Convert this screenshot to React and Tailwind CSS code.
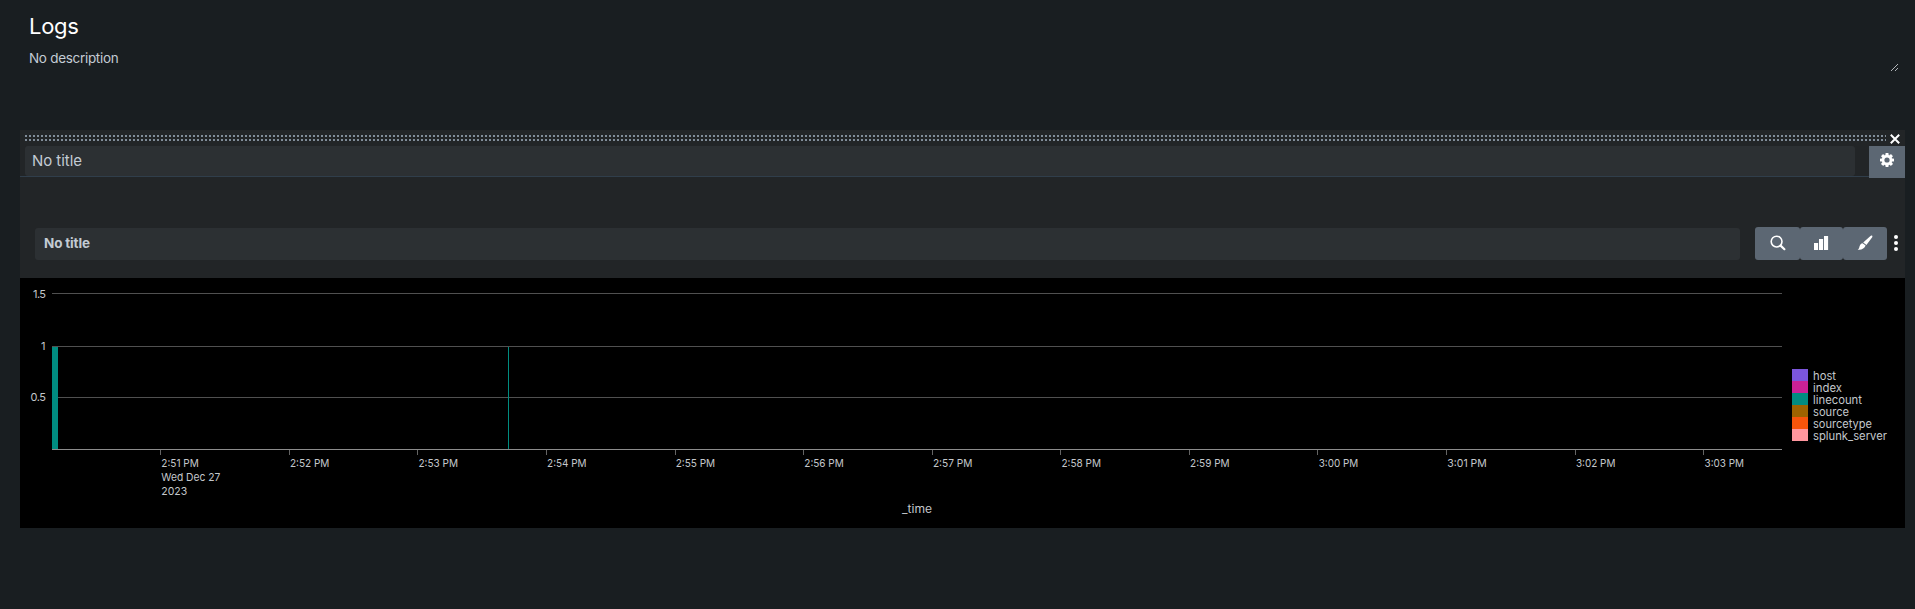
const ink = '#c3c7cb';
const labels = ['2:51 PM', '2:52 PM', '2:53 PM', '2:54 PM', '2:55 PM', '2:56 PM', '2:57 PM', '2:58 PM', '2:59 PM', '3:00 PM', '3:01 PM', '3:02 PM', '3:03 PM'];
const series = [
  ['host', '#7b56db', 23],
  ['index', '#cb2196', 29],
  ['linecount', '#008c80', 49],
  ['source', '#9d6300', 36],
  ['sourcetype', '#f6540b', 59],
  ['splunk_server', '#ff969e', 74],
];

function Dots() {
  return (
    <svg width="1861" height="6" shapeRendering="crispEdges" aria-hidden="true">
      <defs>
        <pattern id="grip" width="4" height="4" patternUnits="userSpaceOnUse">
          <rect width="2" height="2" fill="#818d99" />
        </pattern>
      </defs>
      <rect width="1861" height="6" fill="url(#grip)" />
    </svg>
  );
}

function Gear() {
  return (
    <svg width="14" height="14" viewBox="-7 -7 14 14" aria-hidden="true">
      <g fill="#fff">
        {[0, 45, 90, 135].map((a) => (
          <rect key={a} x="-1.6" y="-7" width="3.2" height="14" rx="0.7" transform={`rotate(${a})`} />
        ))}
        <circle r="5.2" />
      </g>
      <circle r="2.6" fill="#5c6773" />
    </svg>
  );
}

function Search() {
  return (
    <svg className="mb-0.5" width="16" height="16" viewBox="0 0 16 16" fill="none" stroke="#fff" aria-hidden="true">
      <circle cx="6.6" cy="6.6" r="5.4" strokeWidth="1.6" />
      <path d="M10.6 10.6L14.4 14.2" strokeWidth="2.2" strokeLinecap="round" />
    </svg>
  );
}

function Bars() {
  return (
    <svg className="mb-0.5 mr-px" width="16" height="16" viewBox="0 0 16 16" fill="#fff" aria-hidden="true">
      <rect x="1" y="8" width="4.1" height="7" />
      <rect x="6" y="4" width="4.1" height="11" />
      <rect x="11" y="1" width="4.1" height="14" />
    </svg>
  );
}

function Brush() {
  return (
    <svg className="mb-0.5" width="16" height="16" viewBox="0 0 16 16" fill="#fff" aria-hidden="true">
      <path d="M14.8 .6C15.5 .8 15.6 1.5 15.2 2.2L9.4 10L6.2 7.5L13.2 1.2C13.8 .6 14.4 .4 14.8 .6Z" />
      <path d="M5.6 8.2L8.6 10.6C7.6 13.4 4.3 15.4 .7 14.7C2.6 13.6 2 12 3 10.2C3.6 9 4.4 8.3 5.6 8.2Z" />
    </svg>
  );
}

function Chart() {
  return (
    <svg className="block" width="1885" height="250" viewBox="20 278 1885 250" fontSize="11" fill={ink}>
      <g shapeRendering="crispEdges">
        <rect x="52" y="293" width="1730" height="1" fill="#505050" />
        <rect x="52" y="346" width="1730" height="1" fill="#505050" />
        <rect x="52" y="397" width="1730" height="1" fill="#505050" />
        <rect x="52" y="347" width="6" height="102" fill="#008c80" />
        <rect x="508" y="347" width="1" height="102" fill="#008c80" />
        <rect x="52" y="449" width="1730" height="1" fill="#8c8c8c" />
        {labels.map((l, i) => (
          <rect key={l} x={Math.floor(160.6 + i * 128.6)} y="450" width="1" height="5" fill="#646464" />
        ))}
      </g>
      <text x="33" y="298" textLength="13">1.5</text>
      <text x="41" y="350">1</text>
      <text x="30.5" y="401" textLength="15.5">0.5</text>
      {labels.map((l, i) => (
        <text key={l} x={161.3 + i * 128.6} y="467" lengthAdjust="spacingAndGlyphs" textLength={i === 0 ? 37.5 : 39.5}>{l}</text>
      ))}
      <text x="161.3" y="481" lengthAdjust="spacingAndGlyphs" textLength="59">Wed Dec 27</text>
      <text x="161.3" y="495" lengthAdjust="spacingAndGlyphs" textLength="26">2023</text>
      <text x="902" y="513" lengthAdjust="spacingAndGlyphs" textLength="30">_time</text>
      {series.map(([name, color, w], i) => (
        <g key={name}>
          <rect x="1792" y={369 + i * 12} width="16" height="12" fill={color} />
          <text x="1813" y={380 + i * 12} fontSize="11.5" lengthAdjust="spacingAndGlyphs" textLength={w}>{name}</text>
        </g>
      ))}
    </svg>
  );
}

export default function App() {
  const button = 'flex items-center justify-center rounded-[3px] bg-[#5c6773]';
  return (
    <div className="h-[609px] w-[1915px] overflow-hidden bg-[#191e21] font-['Inter',sans-serif] text-[#c3cbd4]">
      <header className="flex h-[130px] items-start justify-between pl-[29px] pr-4">
        <div>
          <h1 className="pt-3 text-[22px] leading-7 tracking-[-0.3px] text-white">Logs</h1>
          <p className="pt-2 text-[13.5px] leading-5 tracking-[-0.3px]">No description</p>
        </div>
        <svg className="mt-[63px]" width="9" height="9" viewBox="0 0 9 9" stroke="#b0b4b8" strokeWidth="1" aria-hidden="true">
          <path d="M1 8L8 1M5 8L8 5" />
        </svg>
      </header>
      <main className="ml-5 w-[1885px] bg-[#222527]">
        <div className="flex h-4 justify-between pl-[5px] pr-[5px] pt-[5px]">
          <Dots />
          <svg className="-mt-px" width="10" height="10" viewBox="0 0 10 10" stroke="#fff" strokeWidth="2" aria-hidden="true">
            <path d="M.8 .8L9.2 9.2M9.2 .8L.8 9.2" />
          </svg>
        </div>
        <div className="flex h-8 justify-between">
          <div className="flex h-[31px] flex-1 border-b border-[#303e4b] pl-[5px]">
            <div className="flex h-[30px] w-[1830px] items-center rounded-[3px] bg-[#2c3033] pl-[7px] text-[15px] tracking-[-0.05px]">No title</div>
          </div>
          <button className="flex h-8 w-9 justify-center bg-[#5c6773] pt-[7px]" aria-label="Settings"><Gear /></button>
        </div>
        <div className="flex h-[100px] pl-[15px] pt-[49px]">
          <div className="mt-px flex h-8 w-[1705px] items-center rounded-[3px] bg-[#2c3033] pb-px pl-[9px] text-[13.5px] font-bold tracking-[-0.15px]">No title</div>
          <div className="ml-[15px] flex h-[33px]">
            <button className={`${button} w-[45px]`} aria-label="Search"><Search /></button>
            <button className={`${button} w-[43px]`} aria-label="Visualization"><Bars /></button>
            <button className={`${button} w-11`} aria-label="Format"><Brush /></button>
          </div>
          <svg className="ml-[7px] mt-2" width="4" height="16" viewBox="0 0 4 16" fill="#fff" aria-hidden="true">
            <circle cx="2" cy="2" r="2" />
            <circle cx="2" cy="8" r="2" />
            <circle cx="2" cy="14" r="2" />
          </svg>
        </div>
        <div className="h-[250px] bg-black"><Chart /></div>
      </main>
    </div>
  );
}
